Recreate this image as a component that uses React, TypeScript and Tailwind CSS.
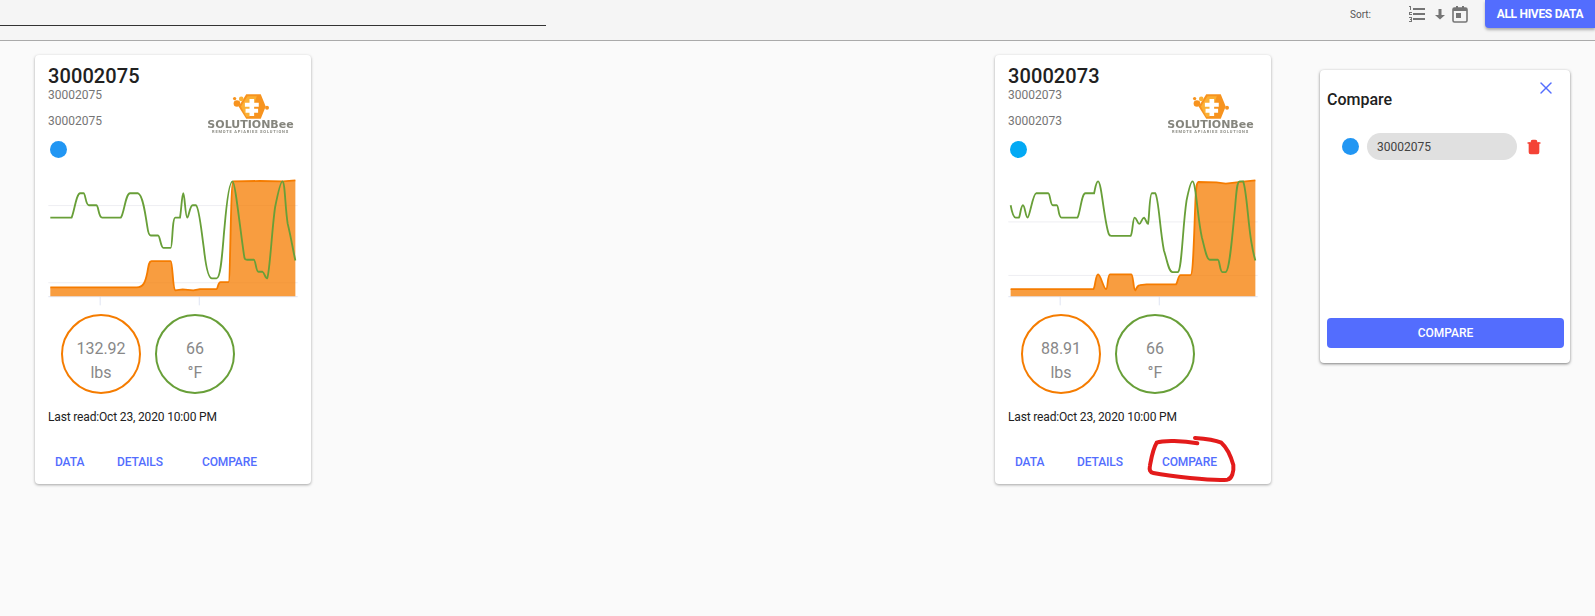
import { ReactNode } from "react"
import { Trash2, X } from "lucide-react"

type Hive = {
  id: string
  dot: string
  weight: string
  temp: string
  grid: number[]
  green: string
  orange: string
  gaps: string[]
}

const hives: Hive[] = [
  {
    id: "30002075",
    dot: "bg-[#2196f3]",
    weight: "132.92",
    temp: "66",
    grid: [495, 727],
    green:
      "M150 531 L214 531 C222 515 228 458 240 458 L250 458 C256 458 256 494 266 494 L288 494 C296 494 294 531 306 531 L362 531 C372 520 376 458 390 458 L414 458 C428 462 436 520 442 560 C444 575 446 585 452 585 L474 585 C480 585 482 622 490 622 L512 622 C518 622 516 531 526 531 L540 531 C544 510 546 458 550 458 C554 458 556 531 562 531 C566 531 570 494 578 494 L588 494 C598 500 604 570 612 625 C618 680 626 714 636 714 L650 714 C664 714 668 620 674 560 C680 490 688 422 698 422 C706 422 720 560 732 640 C734 658 736 658 742 658 L762 658 C768 658 768 694 776 694 L788 694 C794 696 796 714 802 714 C810 700 816 570 826 500 C834 460 842 422 848 422 C856 422 856 500 864 550 C874 590 880 630 887 660",
    orange:
      "M150 741 L410 741 C430 741 436 725 442 695 C446 670 448 662 454 662 L512 662 C518 662 518 748 526 750 L548 747 L580 750 L600 746 L650 746 C654 746 654 725 662 725 L686 725 C692 725 692 422 700 422 L780 421 L850 422 L887 419",
    gaps: ["300", "598"],
  },
  {
    id: "30002073",
    dot: "bg-[#03a9f4]",
    weight: "88.91",
    temp: "66",
    grid: [544, 705],
    green:
      "M61 494 C64 510 68 531 76 531 L86 531 C90 525 92 494 98 494 C104 494 106 531 112 531 C118 531 128 458 138 458 L174 458 C180 458 180 494 188 494 L200 494 C206 496 204 531 214 531 L262 531 C270 520 274 458 286 458 L312 458 C316 440 318 422 324 422 C334 422 342 540 356 580 C358 586 360 586 364 586 L422 586 C428 580 428 531 434 531 C440 531 442 550 448 550 C454 550 456 531 462 531 C468 534 470 550 474 550 C478 540 478 458 486 458 L496 458 C506 470 510 570 522 630 C532 660 536 695 548 695 L564 695 C576 690 578 560 590 480 C596 450 602 422 608 422 C618 422 624 540 636 590 C644 620 650 658 660 658 L684 658 C690 658 690 695 698 695 L708 695 C720 690 728 580 736 500 C740 450 742 422 750 422 L760 422 C770 440 776 560 786 610 C790 635 794 650 797 660",
    orange:
      "M61 746 L310 746 C316 740 316 702 324 702 C332 702 340 746 348 746 C354 746 352 702 360 702 L424 702 C430 702 430 750 436 750 C442 738 444 734 450 734 L470 732 L558 732 C564 728 564 704 572 704 L602 704 C610 704 612 600 616 500 C618 440 620 426 626 424 L680 425 L708 429 L760 423 L797 419",
    gaps: ["210", "508"],
  },
]

function Logo() {
  return (
    <div className="flex w-[87px] flex-col items-center blur-[0.3px]">
      <svg viewBox="695 155 115 80" className="h-[27px] w-[38px]">
        <polygon points="715,195 738,158 782,158 797,195 782,232 738,232" fill="#f7931e" />
        <polygon points="722,195 742,164 770,164 748,226 738,226" fill="#fbb034" />
        <path d="M748 172 h14 v12 h14 v12 h-14 v6 h12 v12 h-12 v10 h-14 v-10 h-12 v-12 h12 v-6 h-14 v-12 h14z" fill="#fff" />
        <circle cx="710" cy="186" r="10" fill="#f7931e" />
        <circle cx="723" cy="172" r="7" fill="#fbb034" />
        <circle cx="703" cy="171" r="5" fill="#f7931e" />
        <circle cx="801" cy="199" r="6" fill="#f7931e" />
      </svg>
      <div className="font-['DejaVu_Sans',sans-serif] text-[11px] leading-[9px] font-bold text-[#85857d]">
        SOLUTIONBee
      </div>
      <div className="text-[4px] leading-[5px] font-bold tracking-[0.8px] text-[#8a8a82] uppercase">
        Remote Apiaries Solutions
      </div>
    </div>
  )
}

function Chart({ hive, x }: { hive: Hive; x: number }) {
  const right = x + 750
  const end = x === 144 ? 887 : 797
  const start = x === 144 ? 150 : 61
  return (
    <svg viewBox={`${x} 400 750 400`} className="mt-[16px] block h-[133px] w-[250px]">
      {hive.grid.map((y) => (
        <line key={y} x1={x} x2={right} y1={y} y2={y} stroke="#eeeef2" strokeWidth="3" />
      ))}
      <line x1={x} x2={right} y1="769" y2="769" stroke="#dfe4f2" strokeWidth="3" />
      {hive.gaps.map((t) => (
        <line key={t} x1={t} x2={t} y1="769" y2="795" stroke="#dfe4f2" strokeWidth="3" />
      ))}
      <path d={`${hive.orange} L${end} 768 L${start} 768 Z`} fill="#f57c00" fillOpacity="0.75" />
      <path d={hive.orange} fill="none" stroke="#f57c00" strokeWidth="5.5" />
      <path d={hive.green} fill="none" stroke="#689f38" strokeWidth="5.5" />
    </svg>
  )
}

function Gauge({ color, value, unit }: { color: string; value: string; unit: string }) {
  return (
    <div className={`flex h-[80px] w-[80px] flex-col items-center justify-center rounded-full border-2 pt-[13px] text-base leading-6 text-[#888] ${color}`}>
      <div>{value}</div>
      <div>{unit}</div>
    </div>
  )
}

function CardButton({ children, className }: { children: ReactNode; className: string }) {
  return <span className={`text-xs leading-4 font-medium tracking-[-0.1px] text-[#536dfe] ${className}`}>{children}</span>
}

function HiveCard({ hive, x, overlay }: { hive: Hive; x: number; overlay?: ReactNode }) {
  return (
    <div className="relative h-[429px] w-[276px] shrink-0 rounded bg-white pt-[11px] shadow-[0_1px_3px_rgba(0,0,0,0.35)]">
      <div className="pl-[13px]">
        <div className="text-xl leading-[20px] font-medium tracking-[0.1px] text-[#212121]">{hive.id}</div>
        <div className="flex h-[55px] justify-between pr-[17px]">
          <div className="text-xs leading-4 text-[#757575]">
            <div className="mt-[1px]">{hive.id}</div>
            <div className="mt-[10px]">{hive.id}</div>
          </div>
          <div className="mt-[7px]">
            <Logo />
          </div>
        </div>
        <div className={`ml-[2px] h-[17px] w-[17px] rounded-full ${hive.dot}`} />
        <Chart hive={hive} x={x} />
        <div className="mt-[7px] flex gap-[14px] pl-[13px]">
          <Gauge color="border-[#f57c00]" value={hive.weight} unit="lbs" />
          <Gauge color="border-[#689f38]" value={hive.temp} unit="°F" />
        </div>
        <div className="mt-[15px] text-xs leading-4 tracking-[-0.16px] text-[#212121]">Last read:Oct 23, 2020 10:00 PM</div>
      </div>
      <div className="mt-[29px] flex pl-[20px]">
        <CardButton className="w-[62px]">DATA</CardButton>
        <CardButton className="mr-[39px]">DETAILS</CardButton>
        <CardButton className="">COMPARE</CardButton>
      </div>
      {overlay}
    </div>
  )
}

export default function App() {
  return (
    <div className="h-[616px] w-[1595px] overflow-hidden bg-[#fafafa] font-['Roboto',sans-serif]">
      <header className="flex h-[41px] items-start border-b border-[#aaaaaa] bg-[#f5f5f5]">
        <div className="h-[26px] w-[546px] border-b border-[#333]" />
        <div className="ml-auto flex h-[28px] items-center">
          <span className="text-[10px] text-[#555]">Sort:</span>
          <svg viewBox="0 0 18 18" className="ml-[37px] h-[18px] w-[18px]" fill="#757575">
            <path d="M5 3h12v2H5zM5 8h12v2H5zM5 13h12v2H5z" />
            <path d="M1 1h2v4H2V2H1zM1 7h3v1H2v1h2v1H1V8h2V8H1zM1 12h3v5H1v-1h2v-1H2v-1h1v-1H1z" />
          </svg>
          <svg viewBox="0 0 12 12" className="ml-[8px] h-[12px] w-[12px]" fill="#757575">
            <path d="M4.5 1h3v6h3.5L6 11.5 1 7h3.5z" />
          </svg>
          <svg viewBox="0 0 16 18" className="ml-[6px] h-[18px] w-[16px]" fill="none">
            <rect x="1" y="3" width="14" height="14" rx="1.5" stroke="#757575" strokeWidth="1.6" />
            <rect x="1" y="3" width="14" height="3" fill="#757575" />
            <rect x="4" y="1" width="2" height="3" fill="#757575" />
            <rect x="10" y="1" width="2" height="3" fill="#757575" />
            <rect x="4" y="8" width="5" height="5" fill="#757575" />
          </svg>
          <button className="ml-[17px] h-[28px] w-[110px] rounded-bl bg-[#536dfe] text-xs font-bold tracking-[-0.3px] text-white shadow-[0_2px_3px_rgba(0,0,0,0.3)]">
            ALL HIVES DATA
          </button>
        </div>
      </header>

      <main className="flex items-start pt-[14px] pl-[35px]">
        <HiveCard hive={hives[0]} x={144} />
        <div className="w-[684px] shrink-0" />
        <HiveCard
          hive={hives[1]}
          x={54}
          overlay={
            <svg viewBox="0 0 480 240" className="absolute top-[365px] left-[125px] h-[80px] w-[160px]" fill="none">
              <path
                d="M225 54 C255 56 285 60 304 68 C322 84 332 106 340 135 C342 155 336 176 322 179 C290 182 250 178 210 174 C170 170 130 165 100 159 C90 157 87 150 90 136 C94 115 98 88 110 68 C130 60 190 62 232 70"
                stroke="#e31b1b"
                strokeWidth="12"
                strokeLinecap="round"
              />
            </svg>
          }
        />
        <aside className="mt-[15px] ml-[49px] flex h-[293px] w-[250px] shrink-0 flex-col rounded bg-white shadow-[0_1px_3px_rgba(0,0,0,0.5)]">
          <div className="relative px-[7px] pt-[18px]">
            <X className="absolute top-[8px] right-[14px] h-[20px] w-[20px] text-[#536dfe]" strokeWidth={1.75} />
            <h2 className="text-base leading-6 font-medium text-[#212121]">Compare</h2>
          </div>
          <div className="mt-[21px] flex items-center pl-[22px]">
            <span className="h-[17px] w-[17px] rounded-full bg-[#2196f3]" />
            <span className="ml-2 flex h-[27px] w-[150px] items-center rounded-full bg-[#e0e0e0] pl-[10px] text-xs text-[#424242]">
              30002075
            </span>
            <Trash2 className="ml-[9px] h-[16px] w-[16px] fill-[#f44336] text-[#f44336]" />
          </div>
          <button className="mt-auto mr-[6px] mb-[15px] ml-[7px] h-[30px] rounded bg-[#536dfe] text-xs font-medium text-white">
            COMPARE
          </button>
        </aside>
      </main>
    </div>
  )
}
